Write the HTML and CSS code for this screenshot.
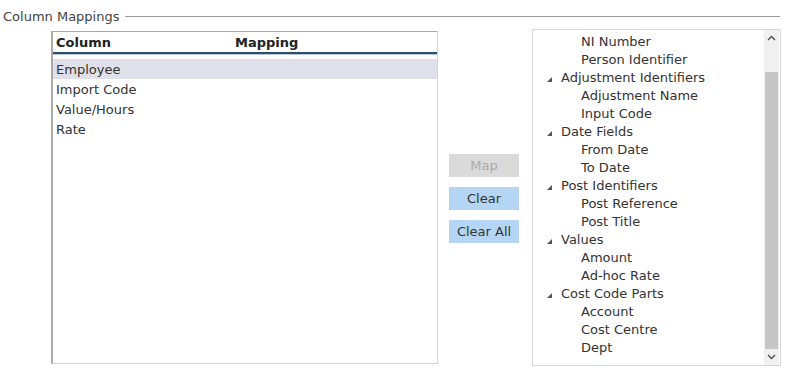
FILE: index.html
```html
<!DOCTYPE html>
<html lang="en">
<head>
    <meta charset="UTF-8">
    <title>Column Mappings</title>
    <link rel="stylesheet" href="styles.css">
</head>
<body>
    <div class="legend">
        <span class="legend-text">Column Mappings</span>
        <span class="legend-line"></span>
    </div>

    <div class="content">
        <div class="grid">
            <div class="grid-head">
                <span class="col-name">Column</span>
                <span class="col-map">Mapping</span>
            </div>
            <div class="grid-rows">
                <div class="row selected">Employee</div>
                <div class="row">Import Code</div>
                <div class="row">Value/Hours</div>
                <div class="row">Rate</div>
            </div>
        </div>

        <div class="buttons">
            <button class="btn disabled" disabled>Map</button>
            <button class="btn">Clear</button>
            <button class="btn">Clear All</button>
        </div>

        <div class="tree">
            <div class="tree-items">
                <div class="node child">NI Number</div>
                <div class="node child">Person Identifier</div>
                <div class="node parent"><span class="arrow"></span>Adjustment Identifiers</div>
                <div class="node child">Adjustment Name</div>
                <div class="node child">Input Code</div>
                <div class="node parent"><span class="arrow"></span>Date Fields</div>
                <div class="node child">From Date</div>
                <div class="node child">To Date</div>
                <div class="node parent"><span class="arrow"></span>Post Identifiers</div>
                <div class="node child">Post Reference</div>
                <div class="node child">Post Title</div>
                <div class="node parent"><span class="arrow"></span>Values</div>
                <div class="node child">Amount</div>
                <div class="node child">Ad-hoc Rate</div>
                <div class="node parent"><span class="arrow"></span>Cost Code Parts</div>
                <div class="node child">Account</div>
                <div class="node child">Cost Centre</div>
                <div class="node child">Dept</div>
            </div>
            <div class="scrollbar">
                <div class="scroll-btn">
                    <svg width="9" height="6" viewBox="0 0 9 6"><polyline points="1,5 4.5,1.5 8,5" fill="none" stroke="#555" stroke-width="1.5"/></svg>
                </div>
                <div class="scroll-track">
                    <div class="scroll-thumb"></div>
                </div>
                <div class="scroll-btn">
                    <svg width="9" height="6" viewBox="0 0 9 6"><polyline points="1,1 4.5,4.5 8,1" fill="none" stroke="#555" stroke-width="1.5"/></svg>
                </div>
            </div>
        </div>
    </div>
</body>
</html>
```

FILE: styles.css
```css
body {
    margin: 0;
    background-color: #fff;
    font-family: "DejaVu Sans", Verdana, sans-serif;
    font-size: 13px;
    color: #333;
}

.legend {
    display: flex;
    align-items: center;
    height: 18px;
    padding: 7px 10px 0 3px;
}

.legend-text {
    color: #444;
}

.legend-line {
    flex: 1;
    border-top: 1px solid #999;
    margin-left: 6px;
}

.content {
    display: flex;
    align-items: flex-start;
    padding-top: 4px;
}

/* grid on the left */
.grid {
    margin-left: 51px;
    margin-top: 2px;
    width: 384px;
    height: 331px;
    border-top: 1px solid #aaa;
    border-left: 2px solid #aaa;
    border-right: 1px solid #d4d4d4;
    border-bottom: 1px solid #d4d4d4;
}

.grid-head {
    display: flex;
    height: 20px;
    align-items: center;
    padding-left: 3px;
    font-weight: bold;
    color: #222;
    border-bottom: 2px solid #2e4d6b;
    box-shadow: 0 1px 0 #b9c7d4;
}

.col-name {
    width: 179px;
}

.grid-rows {
    padding-top: 5px;
}

.row {
    height: 20px;
    line-height: 21px;
    padding-left: 3px;
}

.row.selected {
    background-color: #dfe0e9;
}

/* middle buttons */
.buttons {
    display: flex;
    flex-direction: column;
    gap: 10px;
    margin-left: 11px;
    margin-top: 125px;
}

.btn {
    width: 70px;
    height: 23px;
    border: none;
    padding: 0;
    background-color: #b4d6f4;
    color: #333;
    font-family: "DejaVu Sans", Verdana, sans-serif;
    font-size: 13px;
}

.btn.disabled {
    background-color: #dadada;
    color: #ababab;
}

/* tree on the right */
.tree {
    display: flex;
    margin-left: 13px;
    width: 247px;
    height: 335px;
    border: 1px solid #d6d6d6;
}

.tree-items {
    flex: 1;
    padding-top: 3px;
}

.node {
    height: 18px;
    line-height: 18px;
    display: flex;
    align-items: center;
    white-space: nowrap;
}

.node.child {
    padding-left: 48px;
}

.node.parent {
    padding-left: 14px;
}

.arrow {
    width: 0;
    height: 0;
    border-left: 5px solid transparent;
    border-bottom: 5px solid #555;
    margin-right: 9px;
    margin-top: 3px;
}

.scrollbar {
    width: 15px;
    display: flex;
    flex-direction: column;
    background-color: #f0f0f0;
    margin-right: 1px;
}

.scroll-btn {
    height: 16px;
    display: flex;
    align-items: center;
    justify-content: center;
}

.scroll-track {
    flex: 1;
    padding-top: 26px;
}

.scroll-thumb {
    height: 100%;
    margin: 0 1px;
    background-color: #c6c6c6;
}
```
